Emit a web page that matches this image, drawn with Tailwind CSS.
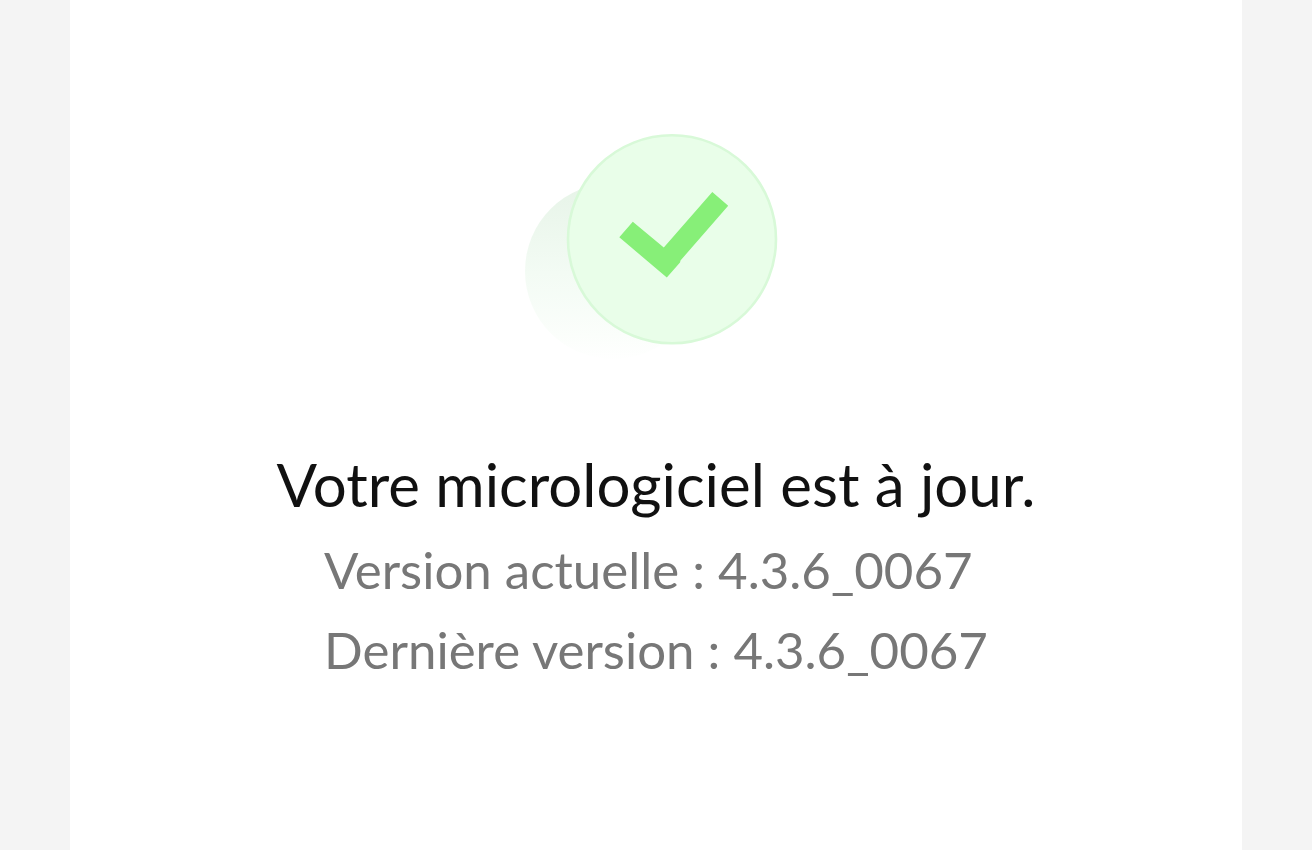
<!DOCTYPE html>
<html lang="fr">
<head>
    <meta charset="UTF-8">
    <meta name="viewport" content="width=device-width, initial-scale=1.0">
    <title>Mise à jour du micrologiciel</title>
    <script src="https://cdn.jsdelivr.net/npm/@tailwindcss/browser@4"></script>
</head>
<body class="bg-[#f4f4f4] font-['Lato',sans-serif]">
    <main class="mx-[70px] min-h-screen bg-white flex flex-col items-center pt-[130px] pb-16">
        <!-- Status icon -->
        <svg class="w-[262px] h-[236px]" viewBox="525 130 262 236" fill="none" aria-hidden="true">
            <defs>
                <linearGradient id="shade" x1="612" y1="184" x2="612" y2="362" gradientUnits="userSpaceOnUse">
                    <stop stop-color="#e7f4e8"/>
                    <stop offset="0.5" stop-color="#f3fbf4"/>
                    <stop offset="0.85" stop-color="#fbfefb"/>
                    <stop offset="1" stop-color="#ffffff"/>
                </linearGradient>
            </defs>
            <circle cx="613" cy="271" r="88" fill="url(#shade)"/>
            <circle cx="672" cy="239.3" r="104" fill="#e9fee9" stroke="#d8f9d8" stroke-width="2.6"/>
            <path d="M619.3 237.3L632.8 221.7L663.8 247.5L712.3 192L728.2 205.7L680.5 260.5L680 262.5L666.8 277.5Z" fill="#87ef78"/>
        </svg>

        <!-- Message -->
        <h1 class="mt-[78px] text-[60px] leading-[80px] text-[#111111] whitespace-nowrap">Votre micrologiciel est à jour.</h1>
        <div class="mt-[6px] text-[51px] leading-[80px] text-[#777777] whitespace-nowrap">
            <p>Version actuelle : 4.3.6_0067</p>
            <p>Dernière version : 4.3.6_0067</p>
        </div>
    </main>
</body>
</html>
